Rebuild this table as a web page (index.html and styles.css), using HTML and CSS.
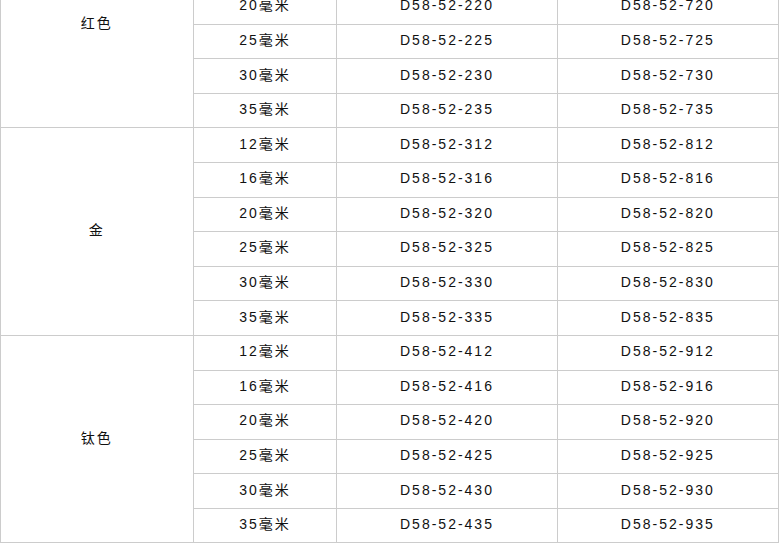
FILE: index.html
```html
<!DOCTYPE html>
<html>
<head>
<meta charset="utf-8">
<link rel="stylesheet" href="styles.css">
</head>
<body>
<table class="spec">
<colgroup>
<col class="c1"><col class="c2"><col class="c3"><col class="c4">
</colgroup>
<tbody>
<tr><td rowspan="6">红色</td><td>12毫米</td><td>D58-52-212</td><td>D58-52-712</td></tr>
<tr><td>16毫米</td><td>D58-52-216</td><td>D58-52-716</td></tr>
<tr><td>20毫米</td><td>D58-52-220</td><td>D58-52-720</td></tr>
<tr><td>25毫米</td><td>D58-52-225</td><td>D58-52-725</td></tr>
<tr><td>30毫米</td><td>D58-52-230</td><td>D58-52-730</td></tr>
<tr><td>35毫米</td><td>D58-52-235</td><td>D58-52-735</td></tr>
<tr><td rowspan="6">金</td><td>12毫米</td><td>D58-52-312</td><td>D58-52-812</td></tr>
<tr><td>16毫米</td><td>D58-52-316</td><td>D58-52-816</td></tr>
<tr><td>20毫米</td><td>D58-52-320</td><td>D58-52-820</td></tr>
<tr><td>25毫米</td><td>D58-52-325</td><td>D58-52-825</td></tr>
<tr><td>30毫米</td><td>D58-52-330</td><td>D58-52-830</td></tr>
<tr><td>35毫米</td><td>D58-52-335</td><td>D58-52-835</td></tr>
<tr><td rowspan="6">钛色</td><td>12毫米</td><td>D58-52-412</td><td>D58-52-912</td></tr>
<tr><td>16毫米</td><td>D58-52-416</td><td>D58-52-916</td></tr>
<tr><td>20毫米</td><td>D58-52-420</td><td>D58-52-920</td></tr>
<tr><td>25毫米</td><td>D58-52-425</td><td>D58-52-925</td></tr>
<tr><td>30毫米</td><td>D58-52-430</td><td>D58-52-930</td></tr>
<tr><td>35毫米</td><td>D58-52-435</td><td>D58-52-935</td></tr>
</tbody>
</table>
</body>
</html>
```
FILE: styles.css
```css
html, body {
  margin: 0;
  padding: 0;
  background: #ffffff;
  overflow: hidden;
}
.spec {
  width: 778px;
  margin-top: -80px;
  border-collapse: collapse;
  table-layout: fixed;
  font-family: "Liberation Sans", "Noto Sans CJK SC", sans-serif;
  font-size: 14px;
  letter-spacing: 2px;
  color: #111111;
}
.c1 { width: 192.7px; }
.c2 { width: 143.6px; }
.c3 { width: 220.4px; }
.c4 { width: 221.3px; }
.spec tr {
  height: 34.58px;
}
.spec td {
  border: 1px solid #cccccc;
  padding: 0 0 3px;
  text-align: center;
  vertical-align: middle;
  line-height: 16px;
}
```
